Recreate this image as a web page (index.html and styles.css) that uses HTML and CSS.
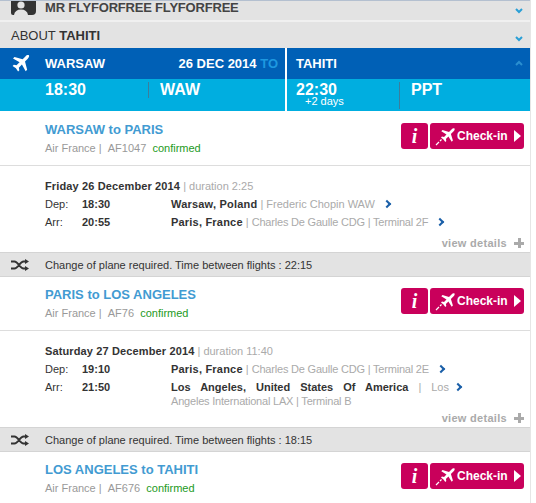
FILE: index.html
```html
<!DOCTYPE html>
<html lang="en">
<head>
    <meta charset="UTF-8">
    <meta name="viewport" content="width=device-width, initial-scale=1.0">
    <title>Trip to Tahiti</title>
    <link rel="stylesheet" href="styles.css">
</head>
<body>
    <div class="page">
        <div class="bar bar-passenger">
            <svg class="avatar" width="25" height="14" viewBox="0 0 25 14">
                <path d="M2 0H25V10Q25 14 21 14H2Q0 14 0 12V0Z" fill="#333"/>
                <circle cx="10" cy="4" r="3.6" fill="#e3e3e3"/>
                <path d="M3 14Q4 8.5 10 8.5T17 14Z" fill="#e3e3e3"/>
            </svg>
            <span class="bar-name">MR FLYFORFREE FLYFORFREE</span>
            <svg class="chev" width="8" height="6" viewBox="0 0 8 6"><path d="M1 1L4 4L7 1" fill="none" stroke="#2a9fd6" stroke-width="2"/></svg>
        </div>
        <div class="bar bar-about">
            <span>ABOUT <b>TAHITI</b></span>
            <svg class="chev" width="8" height="6" viewBox="0 0 8 6"><path d="M1 1L4 4L7 1" fill="none" stroke="#2a9fd6" stroke-width="2"/></svg>
        </div>

        <div class="route">
            <div class="route-top">
                <div class="route-from">
                    <svg class="route-plane" width="20" height="20" viewBox="0 0 24 24"><path d="M21.5 1.6C20.3.9 18.6 1.6 17.3 2.9L14 6.2L4.2 3.6L2.4 5.4L10.3 9.9L6.6 13.6L3.4 13L1.9 14.5L5.9 17.1L8.5 21.1L10 19.6L9.4 16.4L13.1 12.7L17.6 20.6L19.4 18.8L16.8 9L20.1 5.7C21.4 4.4 22.3 2.4 21.5 1.6Z" fill="#fff"/></svg>
                    <span class="route-city">WARSAW</span>
                    <span class="route-date">26 DEC 2014 <em>TO</em></span>
                </div>
                <div class="route-to">
                    <span class="route-city">TAHITI</span>
                    <svg class="chev" width="8" height="6" viewBox="0 0 8 6"><path d="M1 5L4 2L7 5" fill="none" stroke="#2a8fd0" stroke-width="2"/></svg>
                </div>
            </div>
            <div class="route-bottom">
                <div class="route-cell route-cell-from">
                    <span class="route-time">18:30</span>
                    <span class="route-code">WAW</span>
                </div>
                <div class="route-cell route-cell-to">
                    <span class="route-time">22:30<small>+2 days</small></span>
                    <span class="route-code">PPT</span>
                </div>
            </div>
        </div>

        <div class="flight">
            <div class="flight-info">
                <h2>WARSAW to PARIS</h2>
                <p>Air France | &nbsp;AF1047 &nbsp;<span class="ok">confirmed</span></p>
            </div>
            <div class="actions">
                <a class="btn btn-info">i</a>
                <a class="btn btn-checkin">
                    <svg width="22" height="20" viewBox="0 0 22 20"><path d="M19.5 2.5C18.5 2 17.5 2.5 16.5 3.5L14 6L7.5 4L6.3 5.2L11.5 8.5L9 11L7 10.6L6 11.6L8.5 13.4L10.3 16L11.3 15L10.9 13L13.4 10.5L16.7 15.7L17.9 14.5L15.9 8L18.4 5.5C19.4 4.5 20 3.2 19.5 2.5Z" fill="#fff"/><path d="M1 19L4 16M5 15L6.5 13.5" stroke="#fff" stroke-width="1.2"/></svg>
                    <span>Check-in</span>
                    <i class="btn-arrow"></i>
                </a>
            </div>
        </div>
        <div class="detail">
            <div class="detail-date"><b>Friday 26 December 2014</b> | duration 2:25</div>
            <div class="leg">
                <span class="leg-label">Dep:</span>
                <b class="leg-time">18:30</b>
                <div class="leg-place"><b>Warsaw, Poland</b> | Frederic Chopin WAW <i class="go"></i></div>
            </div>
            <div class="leg">
                <span class="leg-label">Arr:</span>
                <b class="leg-time">20:55</b>
                <div class="leg-place"><b>Paris, France</b> | <span class="tight">Charles De Gaulle CDG | Terminal 2F</span> <i class="go"></i></div>
            </div>
            <div class="more">view details <span class="plus"></span></div>
        </div>
        <div class="change">
            <svg width="18" height="12" viewBox="0 0 18 12"><path d="M0 2.5H3.5C7 2.5 9 9.5 12.5 9.5H14M0 9.5H3.5C7 9.5 9 2.5 12.5 2.5H14" fill="none" stroke="#333" stroke-width="2"/><path d="M14 0L18 2.5L14 5ZM14 7L18 9.5L14 12Z" fill="#333"/></svg>
            <span>Change of plane required. Time between flights : 22:15</span>
        </div>

        <div class="flight">
            <div class="flight-info">
                <h2>PARIS to LOS ANGELES</h2>
                <p>Air France | &nbsp;AF76 &nbsp;<span class="ok">confirmed</span></p>
            </div>
            <div class="actions">
                <a class="btn btn-info">i</a>
                <a class="btn btn-checkin">
                    <svg width="22" height="20" viewBox="0 0 22 20"><path d="M19.5 2.5C18.5 2 17.5 2.5 16.5 3.5L14 6L7.5 4L6.3 5.2L11.5 8.5L9 11L7 10.6L6 11.6L8.5 13.4L10.3 16L11.3 15L10.9 13L13.4 10.5L16.7 15.7L17.9 14.5L15.9 8L18.4 5.5C19.4 4.5 20 3.2 19.5 2.5Z" fill="#fff"/><path d="M1 19L4 16M5 15L6.5 13.5" stroke="#fff" stroke-width="1.2"/></svg>
                    <span>Check-in</span>
                    <i class="btn-arrow"></i>
                </a>
            </div>
        </div>
        <div class="detail">
            <div class="detail-date"><b>Saturday 27 December 2014</b> | duration 11:40</div>
            <div class="leg">
                <span class="leg-label">Dep:</span>
                <b class="leg-time">19:10</b>
                <div class="leg-place"><b>Paris, France</b> | <span class="tight">Charles De Gaulle CDG | Terminal 2E</span> <i class="go"></i></div>
            </div>
            <div class="leg">
                <span class="leg-label">Arr:</span>
                <b class="leg-time">21:50</b>
                <div class="leg-place leg-place-wrap">
                    <span class="leg-line"><b>Los Angeles, United States Of America</b> | Los<i class="go"></i></span>
                    <span class="tight">Angeles International LAX | Terminal B</span>
                </div>
            </div>
            <div class="more">view details <span class="plus"></span></div>
        </div>
        <div class="change">
            <svg width="18" height="12" viewBox="0 0 18 12"><path d="M0 2.5H3.5C7 2.5 9 9.5 12.5 9.5H14M0 9.5H3.5C7 9.5 9 2.5 12.5 2.5H14" fill="none" stroke="#333" stroke-width="2"/><path d="M14 0L18 2.5L14 5ZM14 7L18 9.5L14 12Z" fill="#333"/></svg>
            <span>Change of plane required. Time between flights : 18:15</span>
        </div>

        <div class="flight">
            <div class="flight-info">
                <h2>LOS ANGELES to TAHITI</h2>
                <p>Air France | &nbsp;AF676 &nbsp;<span class="ok">confirmed</span></p>
            </div>
            <div class="actions">
                <a class="btn btn-info">i</a>
                <a class="btn btn-checkin">
                    <svg width="22" height="20" viewBox="0 0 22 20"><path d="M19.5 2.5C18.5 2 17.5 2.5 16.5 3.5L14 6L7.5 4L6.3 5.2L11.5 8.5L9 11L7 10.6L6 11.6L8.5 13.4L10.3 16L11.3 15L10.9 13L13.4 10.5L16.7 15.7L17.9 14.5L15.9 8L18.4 5.5C19.4 4.5 20 3.2 19.5 2.5Z" fill="#fff"/><path d="M1 19L4 16M5 15L6.5 13.5" stroke="#fff" stroke-width="1.2"/></svg>
                    <span>Check-in</span>
                    <i class="btn-arrow"></i>
                </a>
            </div>
        </div>
    </div>
</body>
</html>
```
FILE: styles.css
```css
html, body {
    height: 503px;
    overflow: hidden;
}
body {
    margin: 0;
    background: #fff;
    font-family: "Liberation Sans", Arial, sans-serif;
    font-size: 11px;
    color: #333;
}
.page {
    width: 530px;
    height: 503px;
    border-right: 1px solid #e6e6e6;
    overflow: hidden;
}
.bar {
    display: flex;
    align-items: center;
    background: #e3e3e3;
    font-size: 13px;
    color: #333;
    position: relative;
}
.bar-passenger {
    height: 19px;
    padding-left: 11px;
    border-top: 1px solid #b4c0d0;
    border-bottom: 2px solid #f0f0f0;
    font-weight: bold;
}
.bar-name {
    margin-left: 9px;
    margin-top: -7px;
    color: #444;
    letter-spacing: -0.2px;
}
.avatar {
    margin-top: -5px;
}
.bar-about {
    height: 26px;
    padding-left: 11px;
}
.bar .chev {
    position: absolute;
    right: 7px;
    bottom: 6px;
}

.route {
    margin-bottom: 1px;
    color: #fff;
}
.route-top {
    display: flex;
    height: 31px;
    background: #0060b6;
    font-size: 13px;
    font-weight: bold;
}
.route-from {
    width: 285px;
    display: flex;
    align-items: center;
    border-right: 2px solid #fff;
}
.route-plane {
    margin-left: 11px;
}
.route-city {
    margin-left: 14px;
}
.route-date {
    margin-left: auto;
    margin-right: 7px;
}
.route-date em {
    font-style: normal;
    color: #1e98e0;
}
.route-to {
    flex: 1;
    display: flex;
    align-items: center;
    position: relative;
}
.route-to .route-city {
    margin-left: 9px;
}
.route-to .chev {
    position: absolute;
    right: 7px;
    top: 12px;
}
.route-bottom {
    display: flex;
    height: 32px;
    background: #00aee0;
}
.route-cell {
    display: flex;
    font-weight: bold;
    font-size: 16px;
}
.route-cell-from {
    width: 285px;
    border-right: 2px solid #fff;
}
.route-cell-to {
    flex: 1;
}
.route-time {
    position: relative;
    width: 103px;
    padding-top: 3px;
    line-height: 16px;
}
.route-cell-from .route-time {
    margin-left: 45px;
}
.route-cell-to .route-time {
    margin-left: 9px;
}
.route-time small {
    position: absolute;
    left: 9px;
    top: 17px;
    font-size: 11px;
    line-height: 10px;
    font-weight: normal;
}
.route-code {
    height: 27px;
    margin-top: 3px;
    padding-left: 11px;
    line-height: 16px;
    border-left: 1px solid #3c7d9c;
}
.route-cell-from .route-code {
    height: 16px;
}

.flight {
    display: flex;
    justify-content: space-between;
    height: 54px;
    padding-left: 45px;
    border-bottom: 1px solid #ddd;
    box-sizing: border-box;
}
.flight h2 {
    margin: 10px 0 0;
    font-size: 13px;
    line-height: 16px;
    font-weight: bold;
    color: #429bd2;
}
.flight p {
    margin: 3px 0 0;
    line-height: 14px;
    color: #999;
}
.ok {
    color: #1d9a1d;
}
.actions {
    display: flex;
    gap: 2px;
    padding: 11px 6px 0 0;
}
.btn {
    display: flex;
    align-items: center;
    height: 26px;
    background: #c9005b;
    border-radius: 3px;
    color: #fff;
    font-weight: bold;
}
.btn-info {
    width: 27px;
    justify-content: center;
    font-family: "Liberation Serif", serif;
    font-style: italic;
    font-size: 20px;
}
.btn-checkin {
    width: 94px;
    padding-left: 5px;
    box-sizing: border-box;
    font-size: 12px;
}
.btn-arrow {
    width: 0;
    height: 0;
    margin-left: 6px;
    border-left: 7px solid #fff;
    border-top: 6px solid transparent;
    border-bottom: 6px solid transparent;
}

.detail {
    padding: 11px 0 0 45px;
    line-height: 18px;
    color: #aaa;
}
.detail-date {
    height: 18px;
}
.detail-date b {
    letter-spacing: 0.13px;
}
.detail b {
    color: #333;
}
.leg {
    display: flex;
}
.leg-label {
    width: 37px;
    color: #333;
}
.leg-time {
    width: 89px;
}
.leg-place {
    width: 293px;
}
.leg-place > b {
    letter-spacing: 0.2px;
}
.tight {
    letter-spacing: -0.2px;
}
.leg-place-wrap {
    height: 26px;
    padding-top: 2px;
    line-height: 14px;
}
.leg-line {
    display: block;
    text-align: justify;
    text-align-last: justify;
}
.go {
    display: inline-block;
    width: 4px;
    height: 4px;
    margin: 0 3px 1px 6px;
    border-top: 2px solid #1a5fa8;
    border-right: 2px solid #1a5fa8;
    transform: rotate(45deg);
}
.more {
    display: flex;
    justify-content: flex-end;
    align-items: center;
    gap: 7px;
    height: 18px;
    margin-top: 3px;
    padding-right: 6px;
    font-weight: bold;
    letter-spacing: 0.3px;
    color: #aaa;
}
.plus {
    display: block;
    width: 10px;
    height: 10px;
    background:
        linear-gradient(#aaa, #aaa) center / 10px 3px no-repeat,
        linear-gradient(#aaa, #aaa) center / 3px 10px no-repeat;
}
.change {
    display: flex;
    align-items: center;
    height: 25px;
    padding-left: 11px;
    background: #e3e3e3;
    border-top: 1px solid #d4d4d4;
    border-bottom: 1px solid #d4d4d4;
    box-sizing: border-box;
    color: #333;
}
.change span {
    margin-left: 16px;
}
```
